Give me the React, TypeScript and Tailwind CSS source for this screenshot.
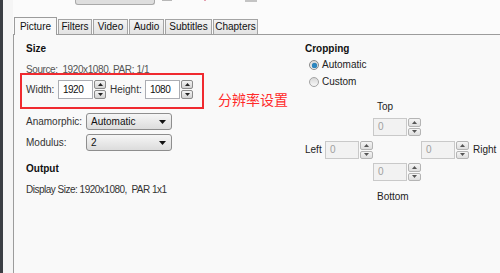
import React from "react";

const tabs = [
  { label: "Picture", width: "w-[43px]", active: true },
  { label: "Filters", width: "w-[34px]", active: false },
  { label: "Video", width: "w-[35px]", active: false },
  { label: "Audio", width: "w-[35px]", active: false },
  { label: "Subtitles", width: "w-[47px]", active: false },
  { label: "Chapters", width: "w-[45px]", active: false },
];

const Arrow: React.FC<{ down?: boolean; light?: boolean }> = ({ down, light }) => (
  <svg width="5" height="3" viewBox="0 0 5 3" aria-hidden="true">
    <path
      d={down ? "M0 0h5L2.5 3z" : "M0 3h5L2.5 0z"}
      fill={light ? "#555" : "#222"}
    />
  </svg>
);

// Spin box: text field with up/down buttons
const SpinBox: React.FC<{ value: string; disabled?: boolean }> = ({ value, disabled }) => {
  if (disabled) {
    return (
      <div className="flex h-[18px]">
        <div className="w-[34px] h-full border border-[#c9c9c9] bg-[#f2f2f2] text-[#a0a0a0] pl-[4px] flex items-center leading-none">
          {value}
        </div>
        <div className="w-[14px] h-full flex flex-col gap-[1px] pl-[1px]">
          <div className="flex-1 rounded-[2px] border border-[#b4b4b4] bg-gradient-to-b from-[#f5f5f5] to-[#dedede] flex items-center justify-center">
            <Arrow light />
          </div>
          <div className="flex-1 rounded-[2px] border border-[#b4b4b4] bg-gradient-to-b from-[#f5f5f5] to-[#dedede] flex items-center justify-center">
            <Arrow down light />
          </div>
        </div>
      </div>
    );
  }
  return (
    <div className="flex h-[19px]">
      <div className="w-[35px] h-full border border-[#abadb3] bg-white text-[#111] pl-[4px] flex items-center leading-none tracking-[-0.5px]">
        {value}
      </div>
      <div className="w-[13px] h-full flex flex-col gap-[1px] pl-[1px]">
        <div className="flex-1 rounded-[2px] border border-[#8b8b8b] bg-gradient-to-b from-[#f4f4f4] to-[#d2d2d2] flex items-center justify-center">
          <Arrow />
        </div>
        <div className="flex-1 rounded-[2px] border border-[#8b8b8b] bg-gradient-to-b from-[#f4f4f4] to-[#d2d2d2] flex items-center justify-center">
          <Arrow down />
        </div>
      </div>
    </div>
  );
};

const Dropdown: React.FC<{ value: string }> = ({ value }) => (
  <div className="w-[86px] h-[17px] rounded-[3px] border border-[#8e8e8e] bg-gradient-to-b from-[#f6f6f6] to-[#dcdcdc] flex items-center justify-between pl-[4px] pr-[5px] text-[#111]">
    <span className="leading-none">{value}</span>
    <svg width="7" height="4" viewBox="0 0 7 4" aria-hidden="true">
      <path d="M0 0h7L3.5 4z" fill="#111" />
    </svg>
  </div>
);

const Radio: React.FC<{ checked?: boolean; label: string }> = ({ checked, label }) => (
  <div className="flex items-center h-[14px] pl-[4px] gap-[3px]">
    {checked ? (
      <span className="w-[10px] h-[10px] rounded-full border border-[#8a8a8a] bg-gradient-to-b from-[#dcdcdc] to-[#f6f6f6] flex items-center justify-center">
        <span className="w-[5px] h-[5px] rounded-full bg-[#2b86c0] shadow-[0_0_1px_#1b5f8c]" />
      </span>
    ) : (
      <span className="w-[10px] h-[10px] rounded-full border border-[#a3a3a3] bg-gradient-to-b from-[#d8d8d8] to-[#f8f8f8]" />
    )}
    <span className="leading-none text-[#222]">{label}</span>
  </div>
);

export default function App() {
  return (
    <div className="w-[500px] h-[273px] overflow-hidden flex bg-[#fbfbfb] text-[10px] text-[#222] font-['Liberation_Sans',Arial,sans-serif]">
      {/* Left edge of the window */}
      <div className="w-[3px] bg-[#3b3e44]" />
      <div className="w-[10px] bg-[#f5f5f5]" />

      <div className="flex-1 flex flex-col">
        {/* Cut-off toolbar above */}
        <div className="h-[17px] flex items-start">
          <div className="ml-[62px] w-[80px] h-[5px] rounded-b-[3px] border border-t-0 border-[#a9a9a9] bg-[#dedede]" />
          <div className="ml-[7px] w-[10px] h-[1px] bg-[#b8b8b8]" />
          <div className="ml-[32px] w-[2px] h-[1px] bg-[#e4a0b0]" />
          <div className="ml-[39px] w-[12px] h-[2px] bg-[#c4c4c4]" />
        </div>

        {/* Tabs */}
        <div className="h-[17px] flex items-end pl-[1px]">
          {tabs.map((tab) =>
            tab.active ? (
              <div
                key={tab.label}
                className={`${tab.width} h-[18px] -mb-[1px] relative z-10 border border-b-0 border-[#9c9c9c] bg-[#f9f9f9] flex items-center justify-center text-[#111] leading-none`}
              >
                {tab.label}
              </div>
            ) : (
              <div
                key={tab.label}
                className={`${tab.width} h-[15px] ml-[1px] border border-b-0 border-[#a4a4a4] bg-gradient-to-b from-[#f3f3f3] to-[#e3e3e3] flex items-center justify-center text-[#111] leading-none`}
              >
                {tab.label}
              </div>
            )
          )}
        </div>

        {/* Tab page */}
        <div className="flex-1 flex border-l border-t border-[#9c9c9c] bg-[#f9f9f9]">
          {/* Size / Output */}
          <div className="w-[291px] pl-[12px] flex flex-col">
            <div className="mt-[8px] h-[12px] leading-[12px] font-bold text-[#111]">Size</div>
            <div className="mt-[9px] h-[12px] leading-[12px] text-[#555] whitespace-pre tracking-[-0.4px]">
              {"Source:  1920x1080, PAR: 1/1"}
            </div>

            <div className="flex items-start -mt-[3px]">
              <div className="-ml-[6px] border-2 border-[#f02a2f] pl-[4px] pt-[5px] pb-[8px] pr-[9px] flex items-center">
                <span className="w-[32px] leading-none text-[#333]">Width:</span>
                <SpinBox value="1920" />
                <span className="ml-[4px] w-[35px] leading-none text-[#333]">Height:</span>
                <SpinBox value="1080" />
              </div>
              <span className="ml-[14px] mt-[16px] text-[14px] leading-[20px] text-[#ff2a2a] font-['Noto_Sans_CJK_SC',sans-serif]">
                分辨率设置
              </span>
            </div>

            <div className="mt-[4px] flex items-center">
              <span className="w-[60px] leading-none text-[#333]">Anamorphic:</span>
              <Dropdown value="Automatic" />
            </div>
            <div className="mt-[4px] flex items-center">
              <span className="w-[60px] leading-none text-[#333]">Modulus:</span>
              <Dropdown value="2" />
            </div>

            <div className="mt-[12px] h-[12px] leading-[12px] font-bold text-[#111]">Output</div>
            <div className="mt-[9px] h-[12px] leading-[12px] text-[#333] whitespace-pre tracking-[-0.5px]">
              {"Display Size: 1920x1080,  PAR 1x1"}
            </div>
          </div>

          {/* Cropping */}
          <div className="flex-1 flex flex-col">
            <div className="mt-[8px] h-[12px] leading-[12px] font-bold text-[#111]">Cropping</div>
            <div className="mt-[3px]">
              <Radio checked label="Automatic" />
            </div>
            <div className="mt-[3px]">
              <Radio label="Custom" />
            </div>

            <div className="mt-[12px] pl-[72px] h-[12px] leading-[12px] text-[#222]">Top</div>
            <div className="mt-[5px] pl-[68px]">
              <SpinBox value="0" disabled />
            </div>
            <div className="mt-[5px] flex items-center">
              <span className="w-[20px] leading-none text-[#222]">Left</span>
              <SpinBox value="0" disabled />
              <div className="w-[48px]" />
              <SpinBox value="0" disabled />
              <span className="ml-[4px] leading-none text-[#222]">Right</span>
            </div>
            <div className="mt-[4px] pl-[68px]">
              <SpinBox value="0" disabled />
            </div>
            <div className="mt-[10px] pl-[72px] h-[12px] leading-[12px] text-[#222]">Bottom</div>
          </div>
        </div>
      </div>
    </div>
  );
}
